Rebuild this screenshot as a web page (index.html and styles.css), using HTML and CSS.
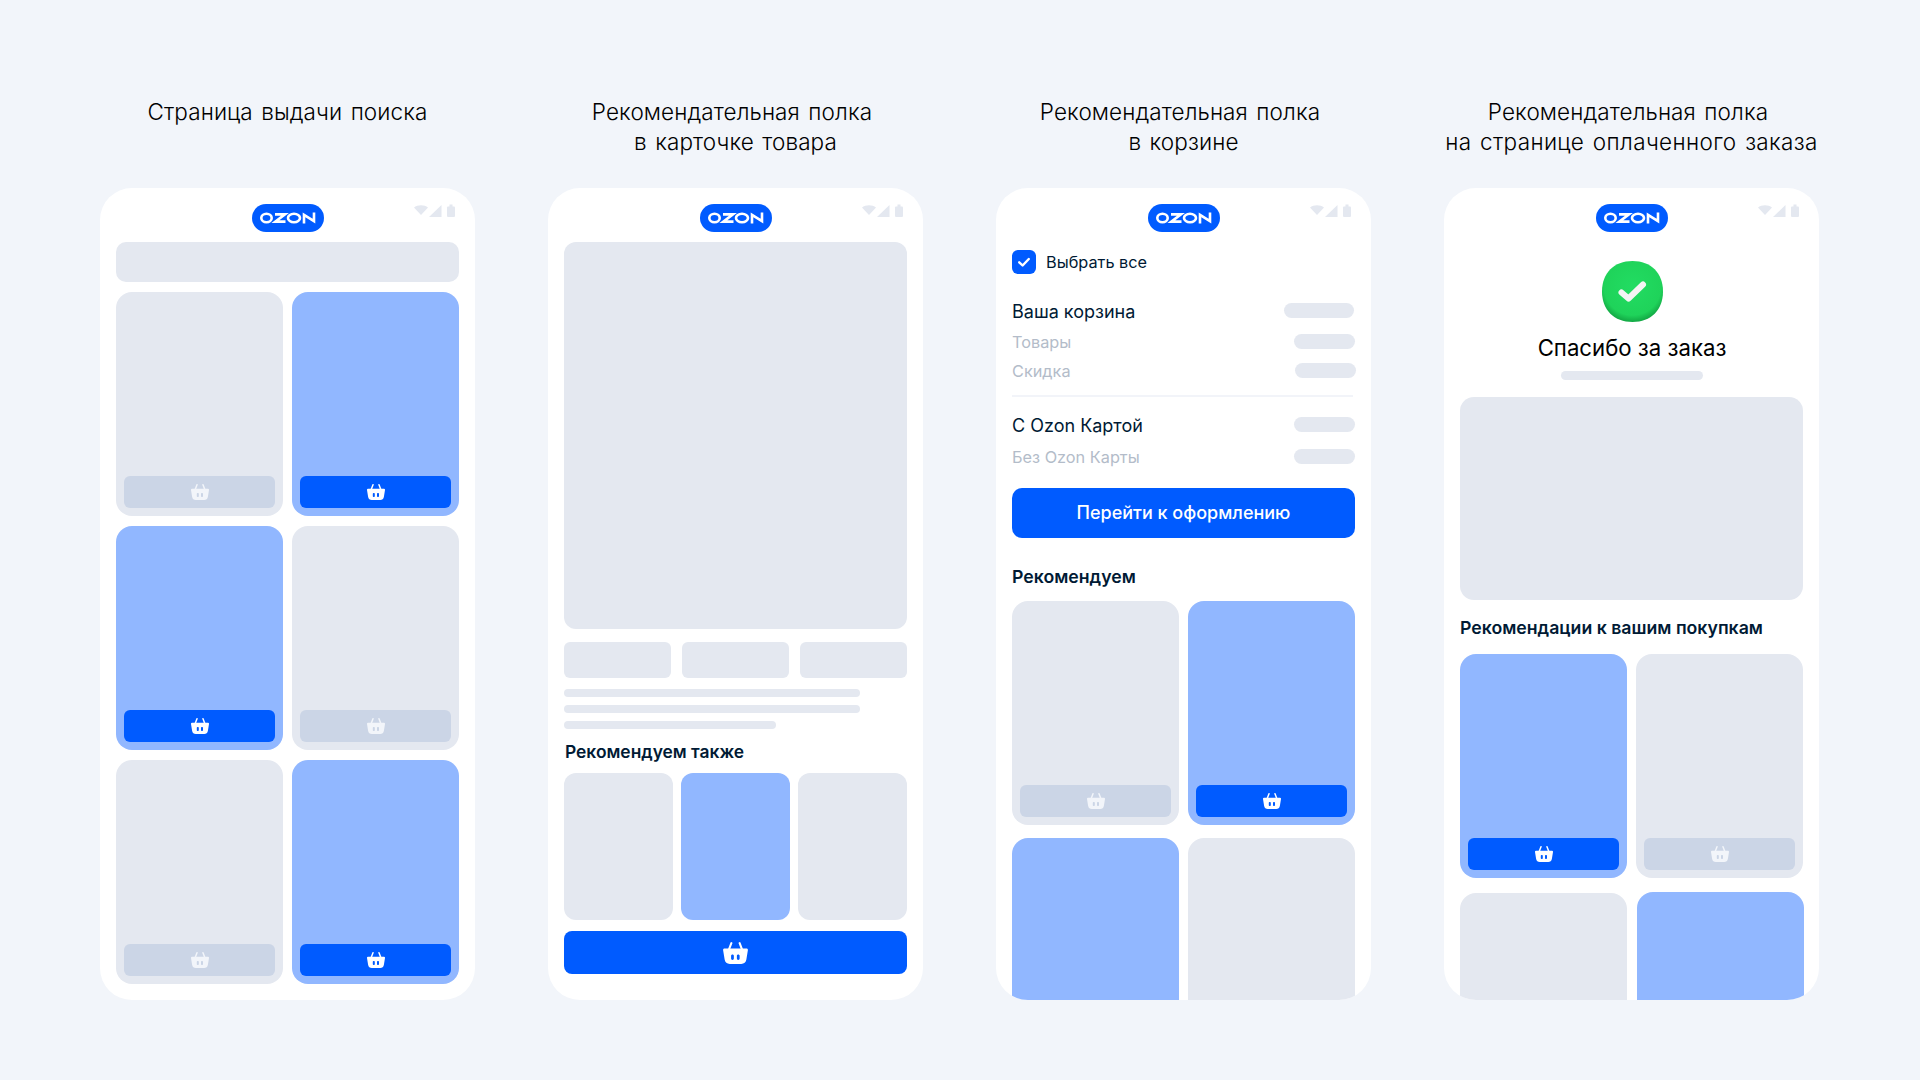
FILE: index.html
```html
<!DOCTYPE html>
<html lang="ru">
<head>
<meta charset="utf-8">
<title>Ozon</title>
<link rel="stylesheet" href="styles.css">
</head>
<body>
<svg class="defs" width="0" height="0" aria-hidden="true">
  <symbol id="basket" viewBox="0 0 18 16">
    <path fill="currentColor" fill-rule="evenodd" d="M1 4.800H17C17.700 4.800 18.100 5.300 18 6L16.900 12.800C16.500 14.900 15.200 16 13.200 16H4.800C2.800 16 1.500 14.900 1.100 12.800L0 6C-0.100 5.300 0.300 4.800 1 4.800ZM6.800 9C6.200 9 5.800 9.400 5.800 10V12C5.800 12.600 6.200 13 6.800 13 7.400 13 7.800 12.600 7.800 12V10C7.800 9.400 7.400 9 6.800 9ZM11 9C10.400 9 10 9.400 10 10V12C10 12.600 10.400 13 11 13 11.600 13 12 12.600 12 12V10C12 9.400 11.600 9 11 9Z"/>
    <path fill="none" stroke="currentColor" stroke-width="1.500" stroke-linecap="round" d="M6 0.800 4.400 5M12 0.800 13.600 5"/>
  </symbol>
  <symbol id="logo" viewBox="0 0 72 28">
    <rect width="72" height="28" rx="14" fill="#005bff"/>
    <g fill="none" stroke="#fff" stroke-width="2.600">
      <ellipse cx="14.500" cy="14" rx="5.200" ry="4.300"/>
      <path d="M23 10.400H33L23.300 17.600H33.500"/>
      <ellipse cx="42" cy="14" rx="6" ry="4.300"/>
      <path d="M52 19.500V10.900L62 17.100V8.500"/>
    </g>
  </symbol>
  <symbol id="status" viewBox="0 0 41 13">
    <path fill="#e4e8f0" d="M0 3.500C3.500 0.500 10.500 0.500 14 3.500L7 11Z"/>
    <path fill="#e4e8f0" d="M15 13 27.500 1V13Z"/>
    <rect fill="#e4e8f0" x="33" y="2.500" width="8" height="10.500" rx="1"/>
    <rect fill="#e4e8f0" x="35.500" y="0.500" width="3" height="3"/>
  </symbol>
</svg>
<main class="board">
  <section class="column">
    <h2 class="title">Страница выдачи поиска</h2>
    <div class="phone">
      <svg class="logo"><use href="#logo"/></svg>
      <svg class="status"><use href="#status"/></svg>
      <div class="search"></div>
      <div class="grid">
        <div class="card"><div class="buy"><svg class="basket"><use href="#basket"/></svg></div></div>
        <div class="card card-on"><div class="buy"><svg class="basket"><use href="#basket"/></svg></div></div>
        <div class="card card-on"><div class="buy"><svg class="basket"><use href="#basket"/></svg></div></div>
        <div class="card"><div class="buy"><svg class="basket"><use href="#basket"/></svg></div></div>
        <div class="card"><div class="buy"><svg class="basket"><use href="#basket"/></svg></div></div>
        <div class="card card-on"><div class="buy"><svg class="basket"><use href="#basket"/></svg></div></div>
      </div>
    </div>
  </section>

  <section class="column">
    <h2 class="title"><span class="title-first">Рекомендательная полка</span><br>в карточке товара</h2>
    <div class="phone">
      <svg class="logo"><use href="#logo"/></svg>
      <svg class="status"><use href="#status"/></svg>
      <div class="hero"></div>
      <div class="thumbs"><div></div><div></div><div></div></div>
      <div class="lines">
        <div class="line"></div>
        <div class="line"></div>
        <div class="line line-short"></div>
      </div>
      <h3 class="heading heading-also">Рекомендуем также</h3>
      <div class="trio"><div></div><div class="on"></div><div></div></div>
      <div class="wide-buy"><svg class="basket-big"><use href="#basket"/></svg></div>
    </div>
  </section>

  <section class="column">
    <h2 class="title"><span class="title-first">Рекомендательная полка</span><br>в корзине</h2>
    <div class="phone">
      <svg class="logo"><use href="#logo"/></svg>
      <svg class="status"><use href="#status"/></svg>
      <div class="select">
        <span class="check"><svg viewBox="0 0 24 24" width="24" height="24"><path d="M7.200 12.300 10.600 15.500 16.800 9" fill="none" stroke="#fff" stroke-width="2.400" stroke-linecap="round" stroke-linejoin="round"/></svg></span>
        <span class="select-label">Выбрать все</span>
      </div>
      <div class="row row-first"><span class="row-main">Ваша корзина</span><i class="pill pill-long"></i></div>
      <div class="row row-sub"><span class="row-muted">Товары</span><i class="pill"></i></div>
      <div class="row row-sub2"><span class="row-muted">Скидка</span><i class="pill pill-over"></i></div>
      <div class="divider"></div>
      <div class="row row-ozon"><span class="row-main">С Ozon Картой</span><i class="pill"></i></div>
      <div class="row row-noozon"><span class="row-muted">Без Ozon Карты</span><i class="pill"></i></div>
      <div class="checkout">Перейти к оформлению</div>
      <h3 class="heading heading-cart">Рекомендуем</h3>
      <div class="grid grid-cart">
        <div class="card"><div class="buy"><svg class="basket"><use href="#basket"/></svg></div></div>
        <div class="card card-on"><div class="buy"><svg class="basket"><use href="#basket"/></svg></div></div>
        <div class="card card-on"></div>
        <div class="card"></div>
      </div>
    </div>
  </section>

  <section class="column">
    <h2 class="title"><span class="title-first">Рекомендательная полка</span><br><span class="title-long">на странице оплаченного заказа</span></h2>
    <div class="phone">
      <svg class="logo"><use href="#logo"/></svg>
      <svg class="status"><use href="#status"/></svg>
      <div class="thanks">
        <svg class="blob" viewBox="0 0 61 61">
          <defs>
            <radialGradient id="g" cx="50%" cy="42%" r="60%">
              <stop offset="0" stop-color="#22dc62"/>
              <stop offset="0.78" stop-color="#1fd35a"/>
              <stop offset="1" stop-color="#10a040"/>
            </radialGradient>
          </defs>
          <path fill="url(#g)" d="M30.500 0C49 0 61 12 61 30.500S49 61 30.500 61 0 49 0 30.500 12 0 30.500 0Z"/>
          <path d="M19.500 31.500 26.500 37.500 41 23.500" fill="none" stroke="#f4f4f4" stroke-width="6" stroke-linecap="round" stroke-linejoin="round"/>
        </svg>
        <div class="thanks-text">Спасибо за заказ</div>
        <div class="thanks-line"></div>
      </div>
      <div class="banner"></div>
      <h3 class="heading heading-order">Рекомендации к вашим покупкам</h3>
      <div class="grid grid-order">
        <div class="card card-on"><div class="buy"><svg class="basket"><use href="#basket"/></svg></div></div>
        <div class="card"><div class="buy"><svg class="basket"><use href="#basket"/></svg></div></div>
        <div class="card"></div>
        <div class="card card-on card-nudge"></div>
      </div>
    </div>
  </section>
</main>
</body>
</html>
```
FILE: styles.css
```css
* { box-sizing: border-box; }
html, body { margin: 0; height: 100%; }
body {
  background: #f2f5fa;
  overflow: hidden;
  font-family: Inter, "Noto Sans", sans-serif;
}
.defs { position: absolute; }
.board {
  display: grid;
  grid-template-columns: repeat(4, 375px);
  column-gap: 73px;
  padding: 96px 0 0 100px;
}
.column { display: flex; flex-direction: column; }
.title {
  margin: 0;
  height: 92px;
  padding-top: 1px;
  text-align: center;
  font-family: Inter, "Noto Sans", sans-serif;
  font-weight: 300;
  font-size: 22.500px;
  letter-spacing: 0.100px;
  word-spacing: 2px;
  line-height: 30px;
  color: #000;
  white-space: nowrap;
}
.title-first { padding-right: 7px; }
.title-long { letter-spacing: 0.350px; }
.phone {
  position: relative;
  height: 812px;
  background: #fff;
  border-radius: 32px;
  padding: 16px;
  overflow: hidden;
}
.logo { display: block; width: 72px; height: 28px; margin: 0 auto; }
.status { position: absolute; top: 16px; right: 20px; width: 41px; height: 13px; }
.search { height: 40px; margin-top: 10px; background: #e4e8f0; border-radius: 10px; }
.grid {
  display: grid;
  grid-template-columns: 167px 167px;
  column-gap: 9px;
  row-gap: 10px;
  margin-top: 10px;
}
.card {
  height: 224px;
  background: #e4e8f0;
  border-radius: 16px;
  padding: 8px;
  display: flex;
  align-items: flex-end;
}
.card-on { background: #91b7ff; }
.card-nudge { margin: -1px -1px 0 1px; }
.buy {
  width: 100%;
  height: 32px;
  background: #cbd5e6;
  border-radius: 6px;
  display: flex;
  align-items: center;
  justify-content: center;
  color: #f2f5fa;
}
.card-on .buy { background: #005bff; color: #fff; }
.basket { width: 18px; height: 16px; }
.hero { height: 387px; margin-top: 10px; background: #e4e8f0; border-radius: 12px; }
.thumbs {
  display: grid;
  grid-template-columns: repeat(3, 107px);
  column-gap: 11px;
  margin-top: 13px;
}
.thumbs div { height: 36px; background: #e4e8f0; border-radius: 6px; }
.lines { display: flex; flex-direction: column; gap: 8px; margin-top: 11px; }
.line { width: 296px; height: 8px; background: #e4e8f0; border-radius: 4px; }
.line-short { width: 212px; }
.heading {
  margin: 0;
  font-size: 17.700px;
  line-height: 22px;
  font-weight: 600;
  color: #001a34;
}
.heading-also { margin: 12px 0 0 1px; font-size: 17.400px; }
.trio {
  display: grid;
  grid-template-columns: repeat(3, 109px);
  column-gap: 8px;
  margin-top: 10px;
}
.trio div { height: 147px; background: #e4e8f0; border-radius: 12px; }
.trio .on { background: #91b7ff; }
.wide-buy {
  height: 43px;
  margin-top: 11px;
  background: #005bff;
  border-radius: 8px;
  display: flex;
  align-items: center;
  justify-content: center;
  color: #fff;
}
.basket-big { width: 25px; height: 22px; }
.select { display: flex; align-items: center; gap: 10px; margin-top: 17px; }
.check { width: 24px; height: 24px; background: #005bff; border-radius: 6px; display: block; }
.check svg { display: block; }
.select-label { font-size: 16.300px; line-height: 24px; padding-top: 1px; color: #001a34; }
.row { display: flex; justify-content: space-between; align-items: center; height: 22px; }
.row-first { margin-top: 26px; }
.row-sub { margin-top: 9px; }
.row-sub2 { margin-top: 7px; }
.row-ozon { margin-top: 17px; }
.row-noozon { margin-top: 10px; }
.row-main { font-size: 18px; color: #001a34; }
.row-muted { font-size: 16.300px; color: #b3bcc9; }
.pill { display: block; width: 61px; height: 15px; margin-bottom: 2px; background: #e4e8f0; border-radius: 8px; }
.pill-long { width: 70px; margin-right: 1px; }
.pill-over { margin-right: -1px; }
.divider { height: 2px; width: 341px; margin-top: 13px; background: #f2f4f9; }
.checkout {
  height: 50px;
  margin-top: 20px;
  background: #005bff;
  border-radius: 10px;
  color: #fff;
  font-size: 18px;
  font-weight: 500;
  line-height: 50px;
  text-align: center;
}
.heading-cart { margin-top: 28px; }
.grid-cart { margin-top: 13px; row-gap: 13px; }
.thanks { display: flex; flex-direction: column; align-items: center; margin-top: 29px; padding-left: 1px; }
.blob { display: block; width: 61px; height: 61px; }
.thanks-text { font-size: 22.200px; line-height: 28px; margin-top: 12px; color: #000; }
.thanks-line { width: 142px; height: 9px; margin-top: 9px; background: #e4e8f0; border-radius: 5px; }
.banner { height: 203px; margin-top: 17px; background: #e4e8f0; border-radius: 14px; }
.heading-order { margin-top: 17px; }
.grid-order { margin-top: 15px; row-gap: 15px; }
```
